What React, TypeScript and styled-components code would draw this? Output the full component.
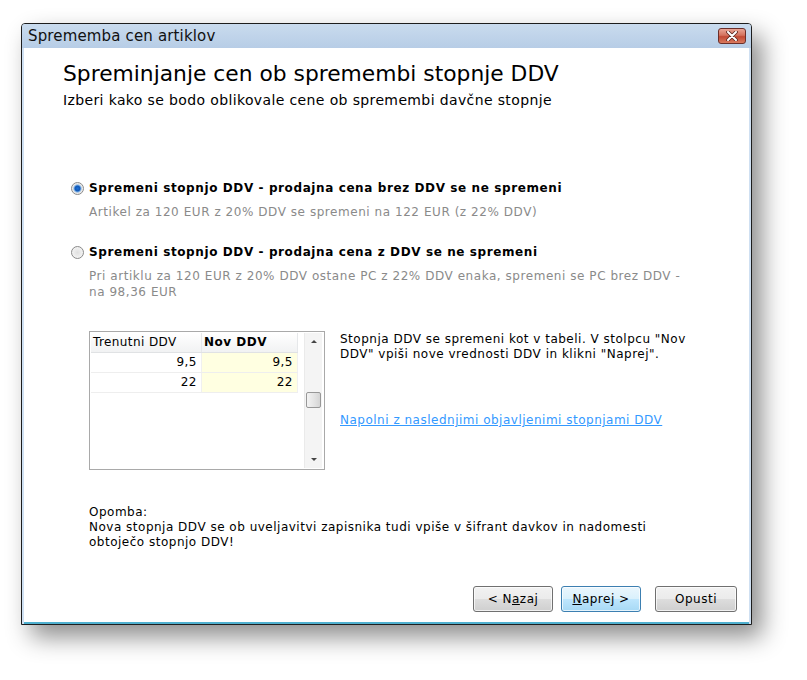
import styled, { createGlobalStyle } from 'styled-components';

const GlobalStyle = createGlobalStyle`
  html, body {
    margin: 0;
    padding: 0;
    background: #ffffff;
  }
  body {
    font-family: 'DejaVu Sans', Verdana, sans-serif;
    color: #000;
  }
`;

const Page = styled.div`
  width: 807px;
  height: 680px;
  padding: 23px 0 0 21px;
  box-sizing: border-box;
`;

const Window = styled.div`
  width: 731px;
  height: 602px;
  box-sizing: border-box;
  display: flex;
  flex-direction: column;
  border: 1px solid #1d1d1d;
  border-radius: 4px 4px 0 0;
  background: #cfe0f2;
  box-shadow: 10px 12px 24px rgba(0, 0, 0, 0.45);
`;

const TitleBar = styled.div`
  height: 24px;
  flex: none;
  display: flex;
  align-items: center;
  justify-content: space-between;
  padding: 0 5px 0 6px;
  background: linear-gradient(#c9dbee, #b7cde6);
  border-radius: 3px 3px 0 0;
`;

const Title = styled.span`
  font-size: 15px;
  color: #111;
  letter-spacing: 0.15px;
`;

const CloseButton = styled.div`
  width: 28px;
  height: 16px;
  box-sizing: border-box;
  border: 1px solid #6b2f2a;
  border-radius: 3px;
  background: linear-gradient(#e9a596 0%, #d4725e 45%, #c24a35 55%, #d97a5f 100%);
  display: flex;
  align-items: center;
  justify-content: center;
`;

const Body = styled.div`
  flex: 1;
  display: flex;
  flex-direction: column;
  background: #ffffff;
  margin: 0 2px 0 2px;
  border-bottom: 2px solid #4fb0cf;
  padding: 12px 0 0 39px;
`;

const Heading = styled.div`
  font-size: 21.8px;
  line-height: 28px;
  color: #000;
`;

const SubHeading = styled.div`
  font-size: 14px;
  line-height: 16px;
  margin-top: 4px;
  letter-spacing: 0.37px;
`;

const Options = styled.div`
  display: flex;
  flex-direction: column;
  margin-top: 72px;
  padding-left: 8px;
`;

const RadioRow = styled.label`
  display: flex;
  align-items: center;
  gap: 5px;
  height: 16px;
`;

const Radio = styled.span<{ checked: boolean }>`
  width: 13px;
  height: 13px;
  box-sizing: border-box;
  border-radius: 50%;
  border: 1px solid #8a8a8a;
  background: ${(p) =>
    p.checked
      ? 'radial-gradient(circle, #1b6fd6 0, #1158b5 2.5px, #7fb2e8 3.5px, #e4e4e4 4.5px, #f8f8f8 6px)'
      : 'radial-gradient(circle, #e0e0e0 0, #f4f4f4 6px)'};
`;

const RadioLabel = styled.span`
  font-size: 12px;
  font-weight: bold;
  letter-spacing: 0.6px;
`;

const Hint = styled.div<{ gap: number }>`
  margin: 8px 0 ${(p) => p.gap}px 18px;
  font-size: 12px;
  line-height: 16px;
  letter-spacing: 0.55px;
  color: #8a8a8a;
  width: 610px;
`;

const TableArea = styled.div`
  display: flex;
  margin: 0 0 0 26px;
  gap: 15px;
`;

const Grid = styled.div`
  width: 236px;
  height: 139px;
  box-sizing: border-box;
  border: 1px solid #a9a9a9;
  display: flex;
  padding: 1px;
  background: #fff;
`;

const GridBody = styled.div`
  flex: 1;
  display: flex;
  flex-direction: column;
`;

const HeaderRow = styled.div`
  display: flex;
  height: 19px;
  width: 207px;
  background: linear-gradient(#ffffff, #f1f2f3);
  border-bottom: 1px solid #e0e2e4;
`;

const HeaderCell = styled.div<{ width: number; bold?: boolean }>`
  width: ${(p) => p.width}px;
  font-size: 12px;
  letter-spacing: ${(p) => (p.bold ? 0.5 : 0.4)}px;
  font-weight: ${(p) => (p.bold ? 'bold' : 'normal')};
  line-height: 19px;
  padding-left: 2px;
  box-sizing: border-box;
  border-right: 1px solid #e6e8ea;
  white-space: nowrap;
`;

const DataRow = styled.div`
  display: flex;
  height: 20px;
  width: 207px;
  border-bottom: 1px solid #eeeeee;
  box-sizing: border-box;
`;

const Cell = styled.div<{ width: number; edit?: boolean }>`
  width: ${(p) => p.width}px;
  box-sizing: border-box;
  text-align: right;
  padding-right: 4px;
  font-size: 12px;
  letter-spacing: 0.5px;
  line-height: 19px;
  background: ${(p) => (p.edit ? '#ffffe1' : '#ffffff')};
  border-right: 1px solid #f0f0f0;
`;

const ScrollBar = styled.div`
  width: 17px;
  display: flex;
  flex-direction: column;
  align-items: center;
  background: #f4f4f4;
  border-left: 1px solid #eaeaea;
  margin-right: 1px;
`;

const Arrow = styled.div<{ down?: boolean }>`
  width: 0;
  height: 0;
  border-left: 3px solid transparent;
  border-right: 3px solid transparent;
  ${(p) => (p.down ? 'border-top: 3px solid #444;' : 'border-bottom: 3px solid #444;')}
  margin: 7px 0;
`;

const Thumb = styled.div`
  width: 15px;
  height: 16px;
  box-sizing: border-box;
  margin-top: 42px;
  border: 1px solid #979797;
  border-radius: 2px;
  background: linear-gradient(90deg, #f3f3f3, #e2e2e2 60%, #d4d4d4);
`;

const Filler = styled.div`
  flex: 1;
`;

const SideText = styled.div`
  display: flex;
  flex-direction: column;
  padding-top: 1px;
`;

const Explain = styled.div`
  font-size: 12px;
  line-height: 15px;
  letter-spacing: 0.5px;
  width: 356px;
`;

const Link = styled.a`
  margin-top: 50px;
  font-size: 12px;
  line-height: 16px;
  letter-spacing: 0.5px;
  color: #3399ff;
  text-decoration: underline;
  cursor: pointer;
`;

const Note = styled.div`
  margin: 35px 0 0 26px;
  font-size: 12px;
  line-height: 15px;
  letter-spacing: 0.5px;
  width: 580px;
`;

const ButtonRow = styled.div`
  margin-top: auto;
  display: flex;
  justify-content: flex-end;
  padding: 0 12px 10px 0;
  gap: 8px;
`;

const Button = styled.button<{ focused?: boolean; spaced?: boolean }>`
  width: ${(p) => (p.spaced ? 82 : 80)}px;
  height: 26px;
  margin-left: ${(p) => (p.spaced ? 6 : 0)}px;
  box-sizing: border-box;
  font-family: 'DejaVu Sans', Verdana, sans-serif;
  font-size: 12px;
  letter-spacing: 0.5px;
  color: #000;
  border-radius: 3px;
  border: 1px solid ${(p) => (p.focused ? '#3c7fb1' : '#707070')};
  background: ${(p) =>
    p.focused
      ? 'linear-gradient(#eaf6fd 0%, #d9f0fc 50%, #bee6fd 51%, #a7d9f5 100%)'
      : 'linear-gradient(#f2f2f2 0%, #ebebeb 50%, #dddddd 51%, #cfcfcf 100%)'};
  box-shadow: inset 0 0 0 1px rgba(255, 255, 255, 0.7);
  padding: 0;
`;

const U = styled.span`
  text-decoration: underline;
`;

const App = () => {
  return (
    <>
      <GlobalStyle />
      <Page>
        <Window>
          <TitleBar>
            <Title>Sprememba cen artiklov</Title>
            <CloseButton>
              <svg width="12" height="10" viewBox="0 0 12 10">
                <path d="M2 1 L10 9 M10 1 L2 9" stroke="#5a2620" strokeWidth="3.6" strokeLinecap="round" />
                <path d="M2 1 L10 9 M10 1 L2 9" stroke="#ffffff" strokeWidth="2" strokeLinecap="round" />
              </svg>
            </CloseButton>
          </TitleBar>
          <Body>
            <Heading>Spreminjanje cen ob spremembi stopnje DDV</Heading>
            <SubHeading>Izberi kako se bodo oblikovale cene ob spremembi davčne stopnje</SubHeading>
            <Options>
              <RadioRow>
                <Radio checked />
                <RadioLabel>Spremeni stopnjo DDV - prodajna cena brez DDV se ne spremeni</RadioLabel>
              </RadioRow>
              <Hint gap={24}>Artikel za 120 EUR z 20% DDV se spremeni na 122 EUR (z 22% DDV)</Hint>
              <RadioRow>
                <Radio checked={false} />
                <RadioLabel>Spremeni stopnjo DDV - prodajna cena z DDV se ne spremeni</RadioLabel>
              </RadioRow>
              <Hint gap={31}>
                Pri artiklu za 120 EUR z 20% DDV ostane PC z 22% DDV enaka, spremeni se PC brez DDV -
                na 98,36 EUR
              </Hint>
            </Options>
            <TableArea>
              <Grid>
                <GridBody>
                  <HeaderRow>
                    <HeaderCell width={111}>Trenutni DDV</HeaderCell>
                    <HeaderCell width={96} bold>
                      Nov DDV
                    </HeaderCell>
                  </HeaderRow>
                  <DataRow>
                    <Cell width={111}>9,5</Cell>
                    <Cell width={96} edit>
                      9,5
                    </Cell>
                  </DataRow>
                  <DataRow>
                    <Cell width={111}>22</Cell>
                    <Cell width={96} edit>
                      22
                    </Cell>
                  </DataRow>
                </GridBody>
                <ScrollBar>
                  <Arrow />
                  <Thumb />
                  <Filler />
                  <Arrow down />
                </ScrollBar>
              </Grid>
              <SideText>
                <Explain>
                  Stopnja DDV se spremeni kot v tabeli. V stolpcu "Nov DDV" vpiši nove vrednosti DDV in
                  klikni "Naprej".
                </Explain>
                <Link>Napolni z naslednjimi objavljenimi stopnjami DDV</Link>
              </SideText>
            </TableArea>
            <Note>
              Opomba:
              <br />
              Nova stopnja DDV se ob uveljavitvi zapisnika tudi vpiše v šifrant davkov in nadomesti
              obtoječo stopnjo DDV!
            </Note>
            <ButtonRow>
              <Button>
                &lt; N<U>a</U>zaj
              </Button>
              <Button focused>
                <U>N</U>aprej &gt;
              </Button>
              <Button spaced>Opusti</Button>
            </ButtonRow>
          </Body>
        </Window>
      </Page>
    </>
  );
};

export default App;
